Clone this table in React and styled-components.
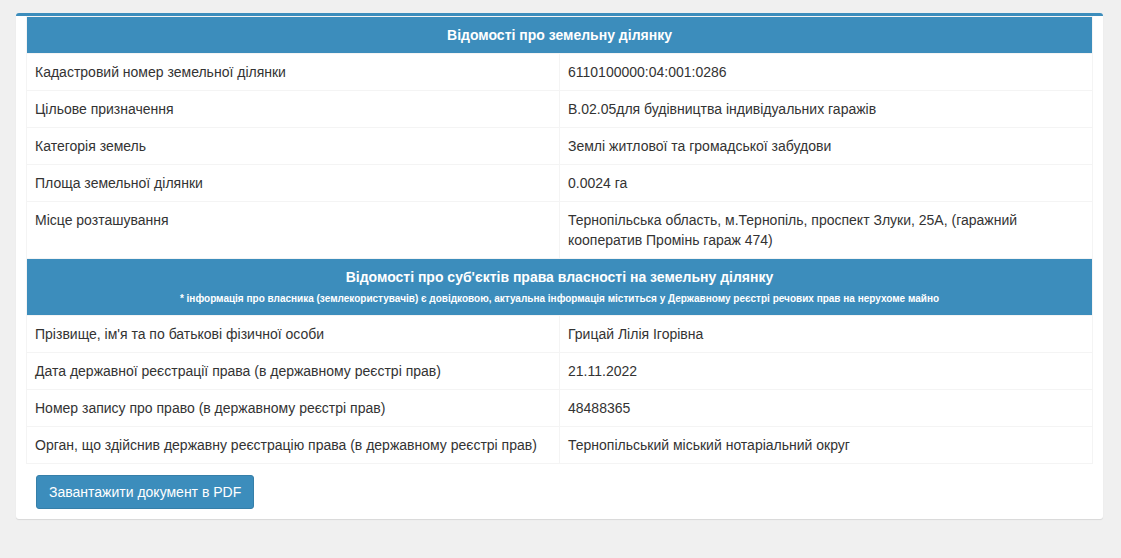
import styled, { createGlobalStyle } from "styled-components";

const GlobalStyle = createGlobalStyle`
  body {
    margin: 0;
    background: #f0f0f0;
    font-family: "Liberation Sans", Arial, sans-serif;
    font-size: 14px;
    line-height: 20px;
    color: #333;
  }
`;

const Page = styled.div`
  padding: 13px 18px 20px 16px;
`;

const Box = styled.div`
  background: #fff;
  border-top: 3px solid #3c8dbc;
  border-radius: 3px;
  box-shadow: 0 1px 1px rgba(0, 0, 0, 0.1);
  padding: 0 10px 10px;
`;

const Table = styled.table`
  width: 100%;
  border-collapse: collapse;
  border: 1px solid #f4f4f4;
  margin-bottom: 11px;
`;

const HeadCell = styled.th`
  background: #3c8dbc;
  color: #fff;
  font-weight: 700;
  text-align: center;
  padding: 8px 8px ${(p) => (p.$withNote ? "6px" : "8px")};
  border: 0;
`;

const Note = styled.div`
  font-size: 10px;
  line-height: 20px;
  margin-top: 2px;
`;

const Cell = styled.td`
  width: 50%;
  padding: 8px;
  vertical-align: top;
  border: 1px solid #f4f4f4;
`;

const Button = styled.button`
  margin-left: 10px;
  background: #3c8dbc;
  border: 1px solid #367fa9;
  border-radius: 3px;
  color: #fff;
  font-family: "Liberation Sans", Arial, sans-serif;
  font-size: 14px;
  line-height: 20px;
  padding: 6px 12px;
  cursor: pointer;
`;

const landRows = [
  ["Кадастровий номер земельної ділянки", "6110100000:04:001:0286"],
  ["Цільове призначення", "В.02.05для будівництва індивідуальних гаражів"],
  ["Категорія земель", "Землі житлової та громадської забудови"],
  ["Площа земельної ділянки", "0.0024 га"],
  [
    "Місце розташування",
    "Тернопільська область, м.Тернопіль, проспект Злуки, 25А, (гаражний кооператив Промінь гараж 474)",
  ],
];

const ownerRows = [
  ["Прізвище, ім'я та по батькові фізичної особи", "Грицай Лілія Ігорівна"],
  ["Дата державної реєстрації права (в державному реєстрі прав)", "21.11.2022"],
  ["Номер запису про право (в державному реєстрі прав)", "48488365"],
  [
    "Орган, що здійснив державну реєстрацію права (в державному реєстрі прав)",
    "Тернопільський міський нотаріальний округ",
  ],
];

function Rows({ items }) {
  return items.map(([label, value]) => (
    <tr key={label}>
      <Cell>{label}</Cell>
      <Cell>{value}</Cell>
    </tr>
  ));
}

export default function App() {
  return (
    <Page>
      <GlobalStyle />
      <Box>
        <Table>
          <tbody>
            <tr>
              <HeadCell colSpan={2}>Відомості про земельну ділянку</HeadCell>
            </tr>
            <Rows items={landRows} />
            <tr>
              <HeadCell colSpan={2} $withNote>
                Відомості про суб'єктів права власності на земельну ділянку
                <Note>
                  * інформація про власника (землекористувачів) є довідковою,
                  актуальна інформація міститься у Державному реєстрі речових
                  прав на нерухоме майно
                </Note>
              </HeadCell>
            </tr>
            <Rows items={ownerRows} />
          </tbody>
        </Table>
        <Button>Завантажити документ в PDF</Button>
      </Box>
    </Page>
  );
}
